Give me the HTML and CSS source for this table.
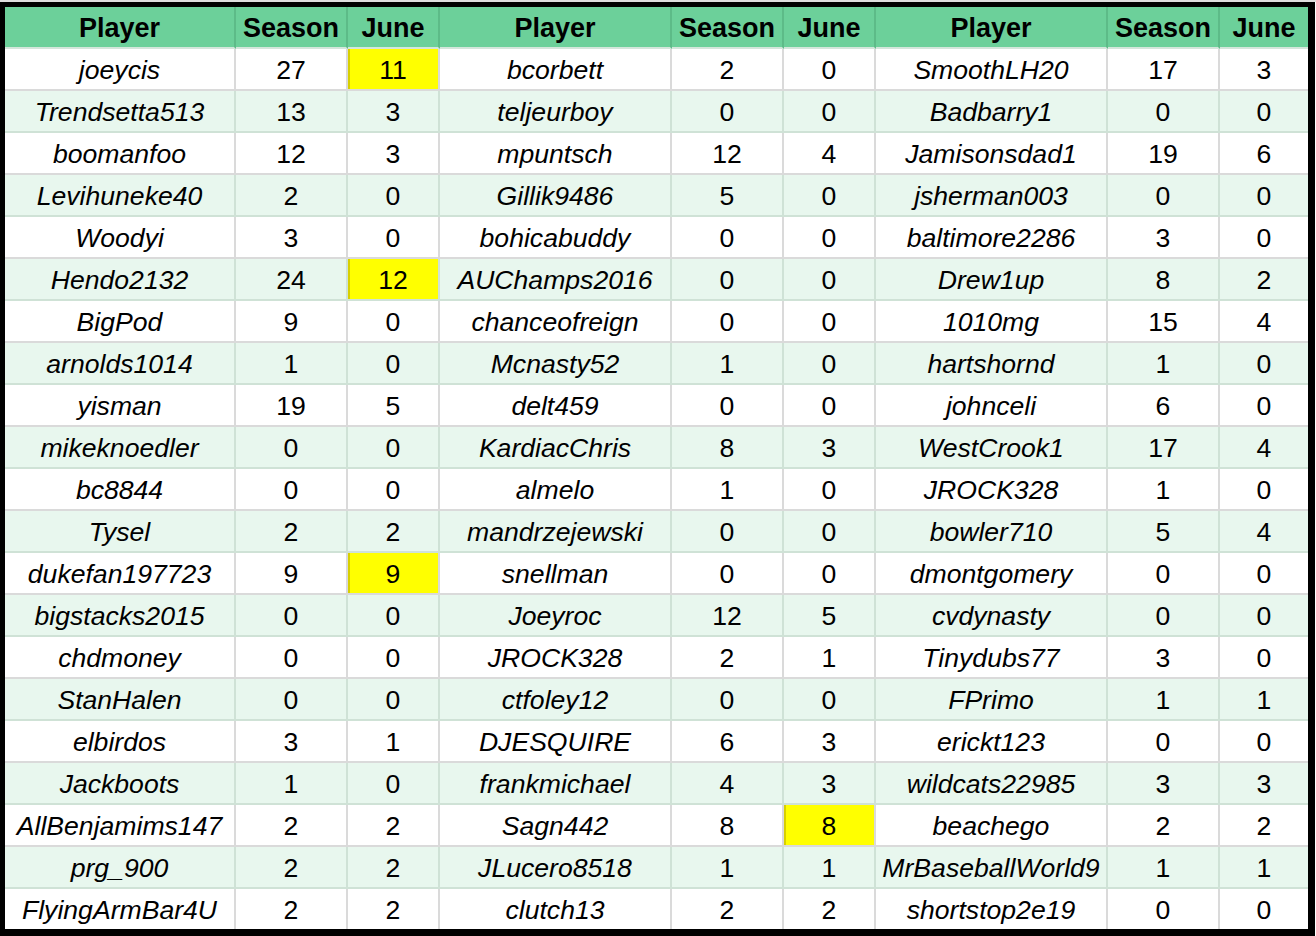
FILE: index.html
```html
<!DOCTYPE html>
<html>
<head>
<meta charset="utf-8">
<link rel="stylesheet" href="styles.css">
</head>
<body>
<div class="sheet">
<table class="grid">
<colgroup>
<col class="c-player"><col class="c-season"><col class="c-june">
<col class="c-player2"><col class="c-season"><col class="c-june">
<col class="c-player2"><col class="c-season"><col class="c-june-last">
</colgroup>
<thead>
<tr class="head"><th>Player</th><th>Season</th><th>June</th><th>Player</th><th>Season</th><th>June</th><th>Player</th><th>Season</th><th>June</th></tr>
</thead>
<tbody>
<tr><td class="name">joeycis</td><td>27</td><td class="hl">11</td><td class="name">bcorbett</td><td>2</td><td>0</td><td class="name">SmoothLH20</td><td>17</td><td>3</td></tr>
<tr><td class="name">Trendsetta513</td><td>13</td><td>3</td><td class="name">teljeurboy</td><td>0</td><td>0</td><td class="name">Badbarry1</td><td>0</td><td>0</td></tr>
<tr><td class="name">boomanfoo</td><td>12</td><td>3</td><td class="name">mpuntsch</td><td>12</td><td>4</td><td class="name">Jamisonsdad1</td><td>19</td><td>6</td></tr>
<tr><td class="name">Levihuneke40</td><td>2</td><td>0</td><td class="name">Gillik9486</td><td>5</td><td>0</td><td class="name">jsherman003</td><td>0</td><td>0</td></tr>
<tr><td class="name">Woodyi</td><td>3</td><td>0</td><td class="name">bohicabuddy</td><td>0</td><td>0</td><td class="name">baltimore2286</td><td>3</td><td>0</td></tr>
<tr><td class="name">Hendo2132</td><td>24</td><td class="hl">12</td><td class="name">AUChamps2016</td><td>0</td><td>0</td><td class="name">Drew1up</td><td>8</td><td>2</td></tr>
<tr><td class="name">BigPod</td><td>9</td><td>0</td><td class="name">chanceofreign</td><td>0</td><td>0</td><td class="name">1010mg</td><td>15</td><td>4</td></tr>
<tr><td class="name">arnolds1014</td><td>1</td><td>0</td><td class="name">Mcnasty52</td><td>1</td><td>0</td><td class="name">hartshornd</td><td>1</td><td>0</td></tr>
<tr><td class="name">yisman</td><td>19</td><td>5</td><td class="name">delt459</td><td>0</td><td>0</td><td class="name">johnceli</td><td>6</td><td>0</td></tr>
<tr><td class="name">mikeknoedler</td><td>0</td><td>0</td><td class="name">KardiacChris</td><td>8</td><td>3</td><td class="name">WestCrook1</td><td>17</td><td>4</td></tr>
<tr><td class="name">bc8844</td><td>0</td><td>0</td><td class="name">almelo</td><td>1</td><td>0</td><td class="name">JROCK328</td><td>1</td><td>0</td></tr>
<tr><td class="name">Tysel</td><td>2</td><td>2</td><td class="name">mandrzejewski</td><td>0</td><td>0</td><td class="name">bowler710</td><td>5</td><td>4</td></tr>
<tr><td class="name">dukefan197723</td><td>9</td><td class="hl">9</td><td class="name">snellman</td><td>0</td><td>0</td><td class="name">dmontgomery</td><td>0</td><td>0</td></tr>
<tr><td class="name">bigstacks2015</td><td>0</td><td>0</td><td class="name">Joeyroc</td><td>12</td><td>5</td><td class="name">cvdynasty</td><td>0</td><td>0</td></tr>
<tr><td class="name">chdmoney</td><td>0</td><td>0</td><td class="name">JROCK328</td><td>2</td><td>1</td><td class="name">Tinydubs77</td><td>3</td><td>0</td></tr>
<tr><td class="name">StanHalen</td><td>0</td><td>0</td><td class="name">ctfoley12</td><td>0</td><td>0</td><td class="name">FPrimo</td><td>1</td><td>1</td></tr>
<tr><td class="name">elbirdos</td><td>3</td><td>1</td><td class="name">DJESQUIRE</td><td>6</td><td>3</td><td class="name">erickt123</td><td>0</td><td>0</td></tr>
<tr><td class="name">Jackboots</td><td>1</td><td>0</td><td class="name">frankmichael</td><td>4</td><td>3</td><td class="name">wildcats22985</td><td>3</td><td>3</td></tr>
<tr><td class="name">AllBenjamims147</td><td>2</td><td>2</td><td class="name">Sagn442</td><td>8</td><td class="hl">8</td><td class="name">beachego</td><td>2</td><td>2</td></tr>
<tr><td class="name">prg_900</td><td>2</td><td>2</td><td class="name">JLucero8518</td><td>1</td><td>1</td><td class="name">MrBaseballWorld9</td><td>1</td><td>1</td></tr>
<tr><td class="name">FlyingArmBar4U</td><td>2</td><td>2</td><td class="name">clutch13</td><td>2</td><td>2</td><td class="name">shortstop2e19</td><td>0</td><td>0</td></tr>
</tbody>
</table>
</div>
</body>
</html>
```

FILE: styles.css
```css
html, body {
  margin: 0;
  padding: 0;
  background: #ffffff;
}
body {
  padding-top: 2px;
  background: linear-gradient(#dedede 0 2px, #ffffff 2px);
  font-family: "Liberation Sans", Arial, sans-serif;
}
.sheet {
  display: inline-block;
  border-style: solid;
  border-color: #000;
  border-width: 5px 7px 7px 5px;
}
.grid {
  border-collapse: separate;
  border-spacing: 0;
  table-layout: fixed;
  width: 1303px;
  font-family: "Liberation Sans", Arial, sans-serif;
}
.c-player { width: 231px; }
.c-player2 { width: 232px; }
.c-season { width: 112px; }
.c-june { width: 92px; }
.c-june-last { width: 88px; }
.grid th, .grid td {
  padding: 2px 0 0 0;
  line-height: 30px;
  text-align: center;
  vertical-align: middle;
  border-right: 2px solid #dadada;
  border-bottom: 2px solid #dadada;
  color: #000;
  white-space: nowrap;
  overflow: hidden;
  box-sizing: border-box;
}
.grid th:last-child, .grid td:last-child { border-right: none; }
.grid tr > * { height: 42px; }
.grid tbody tr:last-child > * { height: 40px; border-bottom: none; }
.head th {
  background: #6cd09a;
  font-weight: bold;
  font-size: 27px;
  border-right-color: #5dbb88;
  border-bottom-color: #d4e6db;
}
.grid td {
  font-size: 26.6px;
}
.grid tbody tr:nth-child(even) td {
  background: #e8f7ee;
  border-color: #cfe2d6;
}
.grid td.name { font-style: italic; }
.grid td.hl, .grid tbody tr:nth-child(even) td.hl {
  background: #ffff00;
  box-shadow: inset 2px 0 0 #d8d000;
}
```
